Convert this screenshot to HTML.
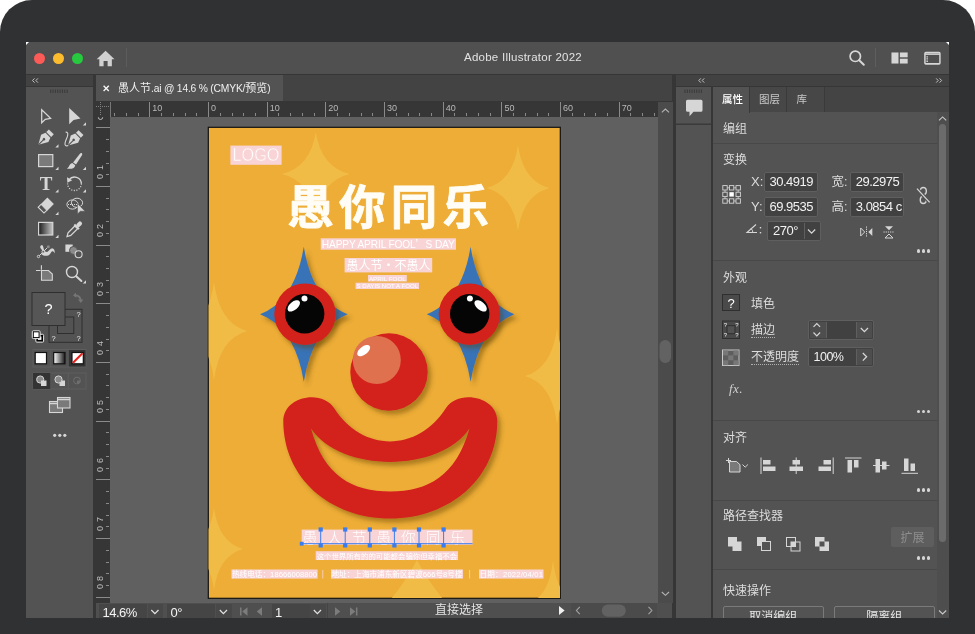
<!DOCTYPE html>
<html><head><meta charset="utf-8"><title>Adobe Illustrator 2022</title>
<style>
*{box-sizing:border-box;margin:0;padding:0}
html,body{width:975px;height:634px;overflow:hidden;background:#fff;font-family:"Liberation Sans","Noto Sans CJK SC",sans-serif;}
.abs{position:absolute}
#bezel{position:absolute;left:0;top:0;width:975px;height:634px;background:#303133;border-radius:32px 32px 0 0;}
#screen{will-change:transform;position:absolute;left:26px;top:42px;width:923px;height:576px;background:#363636;overflow:hidden;color:#ddd;}
#title{position:absolute;left:0;top:0;width:923px;height:32px;background:#505050;}
.tl{position:absolute;top:11.2px;width:11px;height:11px;border-radius:50%}
#title .ttl{position:absolute;left:0;width:100%;top:8px;text-align:center;font-size:11.5px;line-height:14px;color:#e2e2e2;letter-spacing:.25px;padding-left:71px}
#lhead{position:absolute;left:0;top:33px;width:67px;height:11px;background:#424242}
#ltool{position:absolute;left:0;top:45px;width:67px;height:531px;background:#535353}
#tabbar{position:absolute;left:70px;top:33px;width:576px;height:26px;background:#434343}
#tab{position:absolute;left:0;top:0;width:187px;height:26px;background:#535353;font-size:11px;line-height:26px;color:#efefef;white-space:nowrap}
#hruler{position:absolute;left:70px;top:59px;width:562px;height:16px;background:#363636;overflow:hidden}
#vruler{position:absolute;left:70px;top:59px;width:14px;height:502px;background:#363636;overflow:hidden}
#rcorner{position:absolute;left:70px;top:59px;width:14px;height:16px;background:#363636}
#canvas{position:absolute;left:84px;top:75px;width:548px;height:486px;background:#606060;overflow:hidden}
#vscroll{position:absolute;left:632px;top:60px;width:14.5px;height:501px;background:#4b4b4b}
#status{position:absolute;left:70px;top:561px;width:576px;height:15px;background:#4f4f4f;overflow:hidden}
#rhead{position:absolute;left:650px;top:33px;width:273px;height:11px;background:#424242}
#rstrip{position:absolute;left:650px;top:45px;width:34.5px;height:531px;background:#535353}
#panel{position:absolute;left:687px;top:45px;width:236px;height:531px;background:#535353;overflow:hidden}
#ptabs{position:absolute;left:0;top:0;width:236px;height:25px;background:#444}
.sf{position:absolute;top:1px;height:16px;background:#454545;color:#f4f4f4;font-size:13px;line-height:17px;white-space:nowrap;letter-spacing:-.5px}
.sb{position:absolute;top:1px;height:16px;background:#484848}

#hruler i.mt{position:absolute;top:1px;width:1px;height:15px;background:#8a8a8a}
#hruler i.st{position:absolute;top:12px;width:1px;height:3px;background:#8a8a8a}
#hruler b.hl{position:absolute;top:1.5px;font-weight:normal;font-size:9px;line-height:10px;color:#b8b8b8}
#vruler i.vmt{position:absolute;left:0;height:1px;width:14px;background:#8a8a8a}
#vruler i.vst{position:absolute;left:10px;height:1px;width:3px;background:#8a8a8a}
#vruler b.vl{position:absolute;left:0;width:9px;text-align:center;transform:rotate(-90deg);font-weight:normal;font-size:9px;line-height:9px;color:#bdbdbd}

.du{display:inline-block;line-height:13px;border-bottom:1px dotted #b0b0b0}
.pt{position:absolute;line-height:20px;white-space:nowrap}
.inp{position:absolute;letter-spacing:-.5px;background:#414141;border:1px solid #5f5f5f;border-radius:2px;color:#f2f2f2;white-space:nowrap;overflow:hidden}
.ptab{position:absolute;top:0;height:25px;font-size:10.5px;line-height:24px;text-align:left;padding-left:9px;color:#c8c8c8;background:#474747;border-right:1px solid #3a3a3a}
.ptab.on{background:#535353;color:#fff;font-weight:500;height:26px}
.qb{position:absolute;height:20px;border:1px solid #7a7a7a;border-radius:2px;font-size:12px;line-height:21px;text-align:center;color:#e6e6e6}
</style></head><body>
<div id="bezel"></div>
<div id="screen">

<div id="title">
  <div class="tl" style="left:8.2px;background:#fc5b57"></div>
  <div class="tl" style="left:27.2px;background:#fdbc2e"></div>
  <div class="tl" style="left:46px;background:#27c93f"></div>
  <svg class="abs" style="left:70px;top:8px" width="19.2" height="17" viewBox="0 0 18 16"><path d="M9 .8L.6 8.6h2.5V15.2h4V10.3h3.8v4.9h4V8.6h2.5z" fill="#d0d0d0"/></svg>
  <div class="abs" style="left:100px;top:6px;width:1px;height:19px;background:#5c5c5c"></div>
  <div class="ttl">Adobe Illustrator 2022</div>
  <svg class="abs" style="left:822px;top:7px" width="18" height="18" viewBox="0 0 18 18"><circle cx="7.3" cy="7.3" r="5.2" fill="none" stroke="#d6d6d6" stroke-width="1.7"/><path d="M11.2 11.2l4.6 4.6" stroke="#d6d6d6" stroke-width="2" stroke-linecap="round"/></svg>
  <div class="abs" style="left:848.5px;top:6px;width:1px;height:19px;background:#5e5e5e"></div>
  <svg class="abs" style="left:865.3px;top:10px" width="17.6" height="12.5" viewBox="0 0 19 13" preserveAspectRatio="none"><rect x=".5" y=".5" width="7.6" height="11.5" fill="#d6d6d6"/><rect x="9.6" y=".5" width="8.4" height="5" fill="#d6d6d6"/><rect x="9.6" y="7" width="8.4" height="5" fill="#d6d6d6"/></svg>
  <svg class="abs" style="left:897.5px;top:9.3px" width="17.3" height="14.3" viewBox="0 0 19 15" preserveAspectRatio="none"><rect x="1" y="1.5" width="16.5" height="12" rx="1" fill="none" stroke="#d6d6d6" stroke-width="1.6"/><path d="M1 3.3h16.5" stroke="#d6d6d6" stroke-width="1.6"/><path d="M3.5 5.5v6" stroke="#d6d6d6" stroke-width="1.6" stroke-dasharray="1 .7"/></svg>
</div>
<div class="abs" style="left:0;top:0;width:0;height:0;border-top:3px solid #fff;border-right:3px solid transparent"></div>
<div class="abs" style="right:0;top:0;width:0;height:0;border-top:3px solid #fff;border-left:3px solid transparent"></div>


<div id="lhead"><svg class="abs" style="left:0;top:0" width="67" height="11"><path d="M8.5 3.4l-2 2.1 2 2.1M11.9 3.4l-2 2.1 2 2.1" fill="none" stroke="#c4c4c4" stroke-width="1"/></svg></div>
<div id="ltool"></div>
<svg class="abs" style="left:0;top:45px" width="67" height="531" viewBox="26 87 67 531"><rect x="50.2" y="89.5" width="1" height="3.5" fill="#3a3a3a"/><rect x="52.550000000000004" y="89.5" width="1" height="3.5" fill="#3a3a3a"/><rect x="54.900000000000006" y="89.5" width="1" height="3.5" fill="#3a3a3a"/><rect x="57.25" y="89.5" width="1" height="3.5" fill="#3a3a3a"/><rect x="59.6" y="89.5" width="1" height="3.5" fill="#3a3a3a"/><rect x="61.95" y="89.5" width="1" height="3.5" fill="#3a3a3a"/><rect x="64.30000000000001" y="89.5" width="1" height="3.5" fill="#3a3a3a"/><rect x="66.65" y="89.5" width="1" height="3.5" fill="#3a3a3a"/><path d="M41.7 109.7V122.7L45.3 119.3L50.6 118.3z" fill="none" stroke="#d6d6d6" stroke-width="1.25" stroke-linejoin="miter"/><path d="M69.2 108V124.3L73.6 120L80.5 118.4z" fill="#d6d6d6"/><path d="M86 125.5v-3.2l-3.2 3.2z" fill="#d6d6d6"/><g transform="translate(45.2,138) rotate(45) scale(1.08)"><path d="M-3.2-3.6h6.4l1.6 4.2L0 9l-4.8-8.4z" fill="#d6d6d6"/><path d="M0 9V2.4" stroke="#535353" stroke-width="1"/><circle cx="0" cy="1.6" r="1.2" fill="#535353"/><rect x="-3.2" y="-8" width="6.4" height="3.4" fill="#d6d6d6"/></g><path d="M58.5 147.5v-3.2l-3.2 3.2z" fill="#d6d6d6"/><g transform="translate(74.9,138.7) rotate(45) scale(1.08)"><path d="M-3.2-3.6h6.4l1.6 4.2L0 9l-4.8-8.4z" fill="#d6d6d6"/><path d="M0 9V2.4" stroke="#535353" stroke-width="1"/><circle cx="0" cy="1.6" r="1.2" fill="#535353"/><rect x="-3.2" y="-8" width="6.4" height="3.4" fill="#d6d6d6"/></g><path d="M65.6 132.2C68 131.8 68.3 134 67.2 137C66 140 64.2 143.5 65.2 145C65.8 146 67.2 146.2 68.2 145.4" fill="none" stroke="#d6d6d6" stroke-width="1.1"/><rect x="38.6" y="154.6" width="14.2" height="12" fill="#7a7a7a" stroke="#d6d6d6" stroke-width="1.2"/><path d="M58.5 170v-3.2l-3.2 3.2z" fill="#d6d6d6"/><path d="M81.8 153.2c.8.4.5 1.4 0 2.3l-5.8 9-2.9-2.1 6.6-8.4c.7-.9 1.5-1.1 2.1-.8z" fill="#d6d6d6"/><path d="M72.3 163l2.9 2.2c-.2 2.7-2.8 4.1-8.3 3.5 2.6-1.4 2.2-5 5.4-5.7z" fill="#d6d6d6"/><path d="M86 170v-3.2l-3.2 3.2z" fill="#d6d6d6"/><text x="46.2" y="190.4" font-family="Liberation Serif,serif" font-weight="bold" font-size="19" text-anchor="middle" fill="#d6d6d6">T</text><path d="M58.5 192.5v-3.2l-3.2 3.2z" fill="#d6d6d6"/><path d="M69 179.8a6.9 6.9 0 0 1 12.4 3.8" fill="none" stroke="#d6d6d6" stroke-width="1.3"/><path d="M81.4 183.6a6.9 6.9 0 0 1-13.8 0" fill="none" stroke="#d6d6d6" stroke-width="1.3" stroke-dasharray="1.1 1.5"/><path d="M67 177.3l.4 5.4 4.8-2.4z" fill="#d6d6d6"/><path d="M86 192.5v-3.2l-3.2 3.2z" fill="#d6d6d6"/><g transform="translate(45.8,205.6) rotate(-45)"><rect x="-2.2" y="-4.6" width="9" height="9.2" fill="#d6d6d6"/><rect x="-6.6" y="-4.2" width="4.2" height="8.2" fill="none" stroke="#d6d6d6" stroke-width="1.1" transform="translate(0,0)"/></g><path d="M58.5 215v-3.2l-3.2 3.2z" fill="#d6d6d6"/><ellipse cx="72.5" cy="204.5" rx="5.6" ry="4.6" fill="none" stroke="#d6d6d6" stroke-width="1"/><ellipse cx="77" cy="202.8" rx="5.6" ry="4.6" fill="none" stroke="#d6d6d6" stroke-width="1"/><path d="M68 204.5h9" stroke="#d6d6d6" stroke-width="1" stroke-dasharray="1 1"/><path d="M77.5 203.5v10.5l2.8-2.7h4.8z" fill="#d6d6d6" stroke="#535353" stroke-width=".6"/><defs><linearGradient id="gg" x1="0" x2="1"><stop offset="0" stop-color="#1a1a1a"/><stop offset="1" stop-color="#c8c8c8"/></linearGradient></defs><rect x="38.6" y="222.4" width="14.2" height="12.6" fill="url(#gg)" stroke="#d6d6d6" stroke-width="1.2"/><path d="M58.5 238v-3.2l-3.2 3.2z" fill="#d6d6d6"/><g transform="translate(74.2,229.3) rotate(45) scale(1.13)"><path d="M-1.7-2.5h3.4v8.5l-1.7 3-1.7-3z" fill="none" stroke="#d6d6d6" stroke-width="1.1"/><rect x="-2.9" y="-4" width="5.8" height="1.8" fill="#d6d6d6"/><rect x="-1.8" y="-9" width="3.6" height="5.5" rx="1.7" fill="#d6d6d6"/></g><path d="M 40.2 247.1 C 40.2 245 42.8 244.5 43.2 246.7 C 43.6 248.8 44.1 250.9 45.8 251.8 C 48.3 252.6 49.2 248.8 51.7 248.4 C 53.9 248.1 55.1 250.5 54.7 253.5 C 54.3 252.2 53.4 250.9 52.3 251.2 C 50.9 251.5 50.5 255.2 47.1 255.8 C 44.9 256.1 42.8 255.4 41.5 254.3 C 42.8 253.5 42.8 251.8 41.9 250.1 C 41.5 248.8 40.4 248.8 40.2 247.1 Z" fill="#d6d6d6"/><path d="M38.5 256.5l9.8-9.8" stroke="#d6d6d6" stroke-width="1"/><circle cx="38.5" cy="256.5" r="1.2" fill="#535353" stroke="#d6d6d6" stroke-width=".9"/><circle cx="43.2" cy="251.8" r="1.3" fill="#535353" stroke="#d6d6d6" stroke-width=".9"/><circle cx="48.3" cy="246.7" r="1.5" fill="#8a8a8a"/><rect x="65.4" y="244.5" width="7.3" height="7.3" fill="#d6d6d6"/><circle cx="73.5" cy="250.5" r="4" fill="#8a8a8a" stroke="#535353" stroke-width="1"/><circle cx="78.6" cy="254.3" r="3.5" fill="#535353" stroke="#d6d6d6" stroke-width="1.1"/><path d="M36 270.5h4.6M41.4 265.3v4.4" stroke="#d6d6d6" stroke-width="1.1"/><path d="M41.5 270.5h7l3.8 3.6v6.2h-10.8z" fill="#7a7a7a" stroke="#d6d6d6" stroke-width="1.1"/><circle cx="72" cy="272" r="5.5" fill="none" stroke="#d6d6d6" stroke-width="1.4"/><path d="M76.2 276.2l5.2 4.8" stroke="#d6d6d6" stroke-width="2" stroke-linecap="round"/><path d="M86 283.5v-3.2l-3.2 3.2z" fill="#d6d6d6"/><rect x="49" y="309.3" width="33" height="33" fill="#535353" stroke="#2f2f2f" stroke-width="1"/><rect x="57.5" y="317" width="16.3" height="16.5" fill="#535353" stroke="#2f2f2f" stroke-width="1"/><rect x="32" y="292.5" width="33" height="33" fill="#565656" stroke="#2f2f2f" stroke-width="1"/><text x="48.5" y="313.5" font-size="14.5" text-anchor="middle" fill="#fff" font-family="Liberation Sans,sans-serif">?</text><text x="78.5" y="317" font-size="7.5" text-anchor="middle" fill="#e8e8e8" font-family="Liberation Sans,sans-serif">?</text><text x="53.5" y="340.5" font-size="7.5" text-anchor="middle" fill="#e8e8e8" font-family="Liberation Sans,sans-serif">?</text><text x="78.5" y="340.5" font-size="7.5" text-anchor="middle" fill="#e8e8e8" font-family="Liberation Sans,sans-serif">?</text><path d="M74.5 295.5c3.5-.5 6 1.5 6.3 5" fill="none" stroke="#757575" stroke-width="1.8"/><path d="M75.8 292.5l-2.8 3 3.6 2.2zM78 299.5h5.4l-2.6 3.6z" fill="#757575"/><rect x="35.8" y="334.3" width="7.8" height="7.8" rx="1" fill="#000" stroke="#e8e8e8" stroke-width="1"/><rect x="38" y="336.5" width="3.4" height="3.4" fill="#fff"/><rect x="32.3" y="330.8" width="7.8" height="7.8" rx="1" fill="#000" stroke="#e8e8e8" stroke-width="1"/><rect x="33.8" y="332.3" width="4.8" height="4.8" fill="#fff"/><rect x="33" y="349.5" width="53" height="17.5" fill="none" stroke="#5e5e5e" stroke-width="1"/><path d="M50.7 349.5v17.5M68.3 349.5v17.5" stroke="#5e5e5e"/><rect x="68.8" y="350" width="16.7" height="16.5" fill="#333"/><defs><linearGradient id="g2" x1="0" x2="1"><stop offset="0" stop-color="#fff"/><stop offset="1" stop-color="#1a1a1a"/></linearGradient></defs><rect x="35.2" y="352.5" width="11.3" height="11.3" fill="#fff" stroke="#111" stroke-width="1.2"/><rect x="53.7" y="352.5" width="11.3" height="11.3" fill="url(#g2)" stroke="#111" stroke-width="1.2"/><rect x="72" y="352.5" width="11.3" height="11.3" fill="#fff" stroke="#111" stroke-width="1.2"/><path d="M72.8 363l9.7-9.7" stroke="#e8211c" stroke-width="2"/><rect x="33" y="373" width="53" height="16" fill="none" stroke="#5e5e5e" stroke-width="1"/><path d="M50.7 373v16M68.3 373v16" stroke="#5e5e5e"/><rect x="33" y="373" width="17.3" height="16" fill="#333"/><circle cx="40.2" cy="379.5" r="3.6" fill="#8a8a8a" stroke="#d6d6d6" stroke-width="1"/><rect x="41" y="380.5" width="5.5" height="5.5" fill="#d6d6d6"/><rect x="59.5" y="380.5" width="5.5" height="5.5" fill="#d6d6d6"/><circle cx="58.5" cy="379.5" r="3.6" fill="#8a8a8a" stroke="#d6d6d6" stroke-width="1"/><circle cx="77" cy="380.5" r="3.4" fill="none" stroke="#6e6e6e" stroke-width="1"/><path d="M77 380.5h3.4a3.4 3.4 0 0 1-3.4 3.4z" fill="#6e6e6e"/><rect x="49.5" y="401.5" width="13" height="11" fill="#7a7a7a" stroke="#d6d6d6" stroke-width="1.1"/><path d="M49.5 403.5h13" stroke="#d6d6d6" stroke-width="1.5"/><rect x="57.5" y="397.5" width="12.5" height="10.5" fill="#7a7a7a" stroke="#d6d6d6" stroke-width="1.1"/><path d="M57.5 399.5h12.5" stroke="#d6d6d6" stroke-width="1.5"/><circle cx="54.7" cy="435.3" r="1.6" fill="#d6d6d6"/><circle cx="59.8" cy="435.3" r="1.6" fill="#d6d6d6"/><circle cx="64.8" cy="435.3" r="1.6" fill="#d6d6d6"/></svg>


<div id="tabbar"><div id="tab"><svg class="abs" style="left:6px;top:9px" width="9" height="9"><path d="M1.6 1.8l5.2 5.2M6.8 1.8l-5.2 5.2" stroke="#f4f4f4" stroke-width="1.4"/></svg><span class="abs" style="left:22px;top:0">愚人节<span style="font-size:10.3px;letter-spacing:-.2px">.ai @ 14.6 % (CMYK/</span>预览<span style="font-size:10px">)</span></span></div></div>
<div id="canvas"><svg class="abs" style="left:0;top:0" width="548" height="486" viewBox="110 117 548 486"><defs><filter id="sh" x="-20%" y="-20%" width="150%" height="150%"><feDropShadow dx="3.5" dy="4" stdDeviation="2.2" flood-color="#5a3a00" flood-opacity=".42"/></filter><clipPath id="pc"><rect x="208.5" y="127.5" width="351.5" height="470.5"/></clipPath></defs><rect x="208.3" y="127.3" width="352" height="471" fill="#edad36" stroke="#111" stroke-width="1.2"/><g clip-path="url(#pc)" fill="#f1bc46"><path d="M315.8 132Q321.2 167.3 349.8 174Q321.2 180.7 315.8 216Q310.4 180.7 281.8 174Q310.4 167.3 315.8 132z"/><path d="M518 145Q523 181.1 549.5 188Q523 194.9 518 231Q513 194.9 486.5 188Q513 181.1 518 145z"/><path d="M214 282Q219.3 323.2 247 331Q219.3 338.8 214 380Q208.7 338.8 181 331Q208.7 323.2 214 282z"/><path d="M214 508Q218.6 542.4 243 549Q218.6 555.6 214 590Q209.4 555.6 185 549Q209.4 542.4 214 508z"/><path d="M553 560Q556.8 596.1 577 603Q556.8 609.9 553 646Q549.2 609.9 529 603Q549.2 596.1 553 560z"/><path d="M557 328Q562.1 368.3 589 376Q562.1 383.7 557 424Q551.9 383.7 525 376Q551.9 368.3 557 328z"/><path d="M417 560Q433 590.2 455 612Q433 633.8 417 664Q401 633.8 379 612Q401 590.2 417 560z"/></g><rect x="230.4" y="145.6" width="51.2" height="19.2" fill="#f9d4d6"/><text x="256" y="161.3" text-anchor="middle" font-size="17.5" fill="#fff" font-family="Liberation Sans,sans-serif" textLength="47" lengthAdjust="spacingAndGlyphs" stroke="#f9d4d6" stroke-width=".5">LOGO</text><text x="287.3" y="224" font-size="46.5" font-weight="bold" fill="#fffdf5" stroke="#fffdf5" stroke-width=".800" stroke-linejoin="round" font-family="Noto Sans CJK SC,sans-serif" letter-spacing="5.2">愚你同乐</text><rect x="320.7" y="238.3" width="135.3" height="11.4" fill="#f9d4d6"/><text x="388.3" y="247.8" text-anchor="middle" font-size="10.2" fill="#fff" font-family="Liberation Sans,sans-serif" textLength="133" lengthAdjust="spacing">HAPPY APRIL FOOL<tspan font-family="Noto Sans CJK SC,sans-serif">’</tspan>S DAY</text><rect x="344.6" y="258" width="87.6" height="14.4" fill="#f9d4d6"/><text x="388.4" y="269.8" text-anchor="middle" font-size="12" font-weight="400" fill="#fff" font-family="Noto Sans CJK SC,sans-serif" textLength="84" lengthAdjust="spacing">愚人节•不愚人</text><rect x="368" y="275" width="38.8" height="6.5" fill="#f9d4d6"/><text x="387.4" y="280.8" text-anchor="middle" font-size="6" fill="#fff" font-family="Liberation Sans,sans-serif" textLength="37" lengthAdjust="spacingAndGlyphs">APRIL FOOL</text><rect x="355.6" y="282.7" width="63.4" height="6.3" fill="#f9d4d6"/><text x="387.3" y="288.3" text-anchor="middle" font-size="6" fill="#fff" font-family="Liberation Sans,sans-serif" textLength="61.5" lengthAdjust="spacingAndGlyphs">S DAYIS NOT A FOOL</text>
<g filter="url(#sh)"><path d="M303.8 246.7Q312.6 300.7 347.6 314.2Q312.6 327.7 303.8 381.7Q295 327.7 260 314.2Q295 300.7 303.8 246.7z" fill="#3873b7"/></g>
<g filter="url(#sh)"><circle cx="305" cy="314.2" r="30.7" fill="#d3201f"/></g>
<circle cx="304.7" cy="313.7" r="19.7" fill="#050505"/>
<ellipse cx="293.8" cy="305.9" rx="7.4" ry="4" transform="rotate(-40 293.8 305.9)" fill="#fff"/>
<circle cx="304.5" cy="298.5" r="3" fill="#fff"/>
<g filter="url(#sh)"><path d="M470.59999999999997 246.7Q479.4 300.7 514.4 314.2Q479.4 327.7 470.59999999999997 381.7Q461.8 327.7 426.79999999999995 314.2Q461.8 300.7 470.59999999999997 246.7z" fill="#3873b7"/></g>
<g filter="url(#sh)"><circle cx="469.4" cy="314.2" r="30.7" fill="#d3201f"/></g>
<circle cx="469.7" cy="313.7" r="19.7" fill="#050505"/>
<ellipse cx="480.59999999999997" cy="305.9" rx="7.4" ry="4" transform="rotate(40 480.59999999999997 305.9)" fill="#fff"/>
<circle cx="469.9" cy="298.5" r="3" fill="#fff"/><g filter="url(#sh)"><circle cx="389" cy="372" r="38.7" fill="#d3201f"/></g><circle cx="376.8" cy="360" r="24" fill="#e0714f"/><ellipse cx="363.7" cy="350.6" rx="7.6" ry="4" transform="rotate(-38 363.7 350.6)" fill="#fff"/><g filter="url(#sh)"><path d="M283.3 421 C283.3 396 322 389 334 408 C362 452.5 418 452.5 446 408 C458 389 497.3 396 497.3 421 C497.3 478 450 518.5 390.3 518.5 C330 518.5 283.3 478 283.3 421z M311 428.5 C340 473 440 473 469.5 428.5 C456 476 428 491.5 390.3 491.5 C352 491.5 324 476 311 428.5z" fill="#d3201f" fill-rule="evenodd"/></g><rect x="301.7" y="529.6" width="170.8" height="15.2" fill="#f9d4d6"/><text x="302.8" y="542.8" font-size="14.5" font-weight="200" fill="#fff" font-family="Noto Sans CJK SC,sans-serif">愚</text><text x="327.3" y="542.8" font-size="14.5" font-weight="200" fill="#fff" font-family="Noto Sans CJK SC,sans-serif">人</text><text x="351.90000000000003" y="542.8" font-size="14.5" font-weight="200" fill="#fff" font-family="Noto Sans CJK SC,sans-serif">节</text><text x="376.5" y="542.8" font-size="14.5" font-weight="200" fill="#fff" font-family="Noto Sans CJK SC,sans-serif">愚</text><text x="401.1" y="542.8" font-size="14.5" font-weight="200" fill="#fff" font-family="Noto Sans CJK SC,sans-serif">你</text><text x="425.7" y="542.8" font-size="14.5" font-weight="200" fill="#fff" font-family="Noto Sans CJK SC,sans-serif">同</text><text x="450.3" y="542.8" font-size="14.5" font-weight="200" fill="#fff" font-family="Noto Sans CJK SC,sans-serif">乐</text><path d="M301.5 543.7H472.5" stroke="#3b7df0" stroke-width="1"/><path d="M320.7 528.5V546" stroke="#3b7df0" stroke-width="1"/><rect x="318.59999999999997" y="527.4" width="4.2" height="4.2" fill="#3b7df0"/><rect x="318.59999999999997" y="543.3" width="4.2" height="4.2" fill="#3b7df0"/><path d="M345.2 528.5V546" stroke="#3b7df0" stroke-width="1"/><rect x="343.09999999999997" y="527.4" width="4.2" height="4.2" fill="#3b7df0"/><rect x="343.09999999999997" y="543.3" width="4.2" height="4.2" fill="#3b7df0"/><path d="M369.8 528.5V546" stroke="#3b7df0" stroke-width="1"/><rect x="367.7" y="527.4" width="4.2" height="4.2" fill="#3b7df0"/><rect x="367.7" y="543.3" width="4.2" height="4.2" fill="#3b7df0"/><path d="M394.4 528.5V546" stroke="#3b7df0" stroke-width="1"/><rect x="392.29999999999995" y="527.4" width="4.2" height="4.2" fill="#3b7df0"/><rect x="392.29999999999995" y="543.3" width="4.2" height="4.2" fill="#3b7df0"/><path d="M419 528.5V546" stroke="#3b7df0" stroke-width="1"/><rect x="416.9" y="527.4" width="4.2" height="4.2" fill="#3b7df0"/><rect x="416.9" y="543.3" width="4.2" height="4.2" fill="#3b7df0"/><path d="M443.6 528.5V546" stroke="#3b7df0" stroke-width="1"/><rect x="441.5" y="527.4" width="4.2" height="4.2" fill="#3b7df0"/><rect x="441.5" y="543.3" width="4.2" height="4.2" fill="#3b7df0"/><rect x="299.8" y="541.8" width="3.8" height="3.8" fill="#3b7df0"/><rect x="315.7" y="551.2" width="142.3" height="8.8" fill="#f9d4d6"/><text x="386.9" y="558.6" text-anchor="middle" font-size="7.4" fill="#fff" font-family="Noto Sans CJK SC,sans-serif" textLength="140.5" lengthAdjust="spacing">这个世界所有的的可能都会骗你但幸福不会</text><rect x="231.5" y="569.5" width="86.1" height="9.1" fill="#f9d4d6"/><text x="232" y="577.3" font-size="7.6" fill="#fff" font-family="Liberation Sans,Noto Sans CJK SC,sans-serif" textLength="85" lengthAdjust="spacing">热线电话：18666008800</text><path d="M322.8 570v8.5M469.6 570v8.5" stroke="#f9d4d6" stroke-width=".8"/><rect x="331" y="569.5" width="132" height="9.1" fill="#f9d4d6"/><text x="331.5" y="577.3" font-size="7.6" fill="#fff" font-family="Liberation Sans,Noto Sans CJK SC,sans-serif" textLength="131" lengthAdjust="spacing">地址：上海市浦东新区碧波666号8号楼</text><rect x="479" y="569.5" width="64.5" height="9.1" fill="#f9d4d6"/><text x="479.5" y="577.3" font-size="7.6" fill="#fff" font-family="Liberation Sans,Noto Sans CJK SC,sans-serif" textLength="63.5" lengthAdjust="spacing">日期：2022/04/01</text></svg></div>

  <div id="hruler"><i class="mt" style="left:53.3px"></i><b class="hl" style="left:56.3px">10</b><i class="mt" style="left:112px"></i><b class="hl" style="left:115px">0</b><i class="mt" style="left:170.7px"></i><b class="hl" style="left:173.7px">10</b><i class="mt" style="left:229.3px"></i><b class="hl" style="left:232.3px">20</b><i class="mt" style="left:288px"></i><b class="hl" style="left:291px">30</b><i class="mt" style="left:346.7px"></i><b class="hl" style="left:349.7px">40</b><i class="mt" style="left:405.4px"></i><b class="hl" style="left:408.4px">50</b><i class="mt" style="left:464px"></i><b class="hl" style="left:467px">60</b><i class="mt" style="left:522.7px"></i><b class="hl" style="left:525.7px">70</b><i class="st" style="left:18.1px"></i><i class="st" style="left:29.9px"></i><i class="st" style="left:41.6px"></i><i class="st" style="left:65.1px"></i><i class="st" style="left:76.8px"></i><i class="st" style="left:88.5px"></i><i class="st" style="left:100.3px"></i><i class="st" style="left:123.7px"></i><i class="st" style="left:135.5px"></i><i class="st" style="left:147.2px"></i><i class="st" style="left:158.9px"></i><i class="st" style="left:182.4px"></i><i class="st" style="left:194.1px"></i><i class="st" style="left:205.9px"></i><i class="st" style="left:217.6px"></i><i class="st" style="left:241.1px"></i><i class="st" style="left:252.8px"></i><i class="st" style="left:264.5px"></i><i class="st" style="left:276.3px"></i><i class="st" style="left:299.7px"></i><i class="st" style="left:311.5px"></i><i class="st" style="left:323.2px"></i><i class="st" style="left:334.9px"></i><i class="st" style="left:358.4px"></i><i class="st" style="left:370.1px"></i><i class="st" style="left:381.9px"></i><i class="st" style="left:393.6px"></i><i class="st" style="left:417.1px"></i><i class="st" style="left:428.8px"></i><i class="st" style="left:440.6px"></i><i class="st" style="left:452.3px"></i><i class="st" style="left:475.8px"></i><i class="st" style="left:487.5px"></i><i class="st" style="left:499.2px"></i><i class="st" style="left:511px"></i><i class="st" style="left:534.4px"></i><i class="st" style="left:546.2px"></i><i class="st" style="left:557.9px"></i><i class="mt" style="left:13.5px;background:#777"></i></div>
  <div id="vruler"><i class="vmt" style="top:26.3px"></i><i class="vmt" style="top:85px"></i><b class="vl" style="top:62px">1</b><b class="vl" style="top:70.5px">0</b><i class="vmt" style="top:143.6px"></i><b class="vl" style="top:120.6px">2</b><b class="vl" style="top:129.1px">0</b><i class="vmt" style="top:202.3px"></i><b class="vl" style="top:179.3px">3</b><b class="vl" style="top:187.8px">0</b><i class="vmt" style="top:261px"></i><b class="vl" style="top:238px">4</b><b class="vl" style="top:246.5px">0</b><i class="vmt" style="top:319.7px"></i><b class="vl" style="top:296.7px">5</b><b class="vl" style="top:305.2px">0</b><i class="vmt" style="top:378.3px"></i><b class="vl" style="top:355.3px">6</b><b class="vl" style="top:363.8px">0</b><i class="vmt" style="top:437px"></i><b class="vl" style="top:414px">7</b><b class="vl" style="top:422.5px">0</b><i class="vmt" style="top:495.7px"></i><b class="vl" style="top:472.7px">8</b><b class="vl" style="top:481.2px">0</b><i class="vst" style="top:38px"></i><i class="vst" style="top:49.8px"></i><i class="vst" style="top:61.5px"></i><i class="vst" style="top:73.2px"></i><i class="vst" style="top:96.7px"></i><i class="vst" style="top:108.4px"></i><i class="vst" style="top:120.2px"></i><i class="vst" style="top:131.9px"></i><i class="vst" style="top:155.4px"></i><i class="vst" style="top:167.1px"></i><i class="vst" style="top:178.8px"></i><i class="vst" style="top:190.6px"></i><i class="vst" style="top:214px"></i><i class="vst" style="top:225.8px"></i><i class="vst" style="top:237.5px"></i><i class="vst" style="top:249.2px"></i><i class="vst" style="top:272.7px"></i><i class="vst" style="top:284.4px"></i><i class="vst" style="top:296.2px"></i><i class="vst" style="top:307.9px"></i><i class="vst" style="top:331.4px"></i><i class="vst" style="top:343.1px"></i><i class="vst" style="top:354.9px"></i><i class="vst" style="top:366.6px"></i><i class="vst" style="top:390.1px"></i><i class="vst" style="top:401.8px"></i><i class="vst" style="top:413.5px"></i><i class="vst" style="top:425.3px"></i><i class="vst" style="top:448.7px"></i><i class="vst" style="top:460.5px"></i><i class="vst" style="top:472.2px"></i><i class="vst" style="top:483.9px"></i><svg class="abs" style="left:0;top:14px" width="14" height="8"><path d="M2.3 2.3a2.2 2.2 0 0 0 4.4 0" stroke="#bbb" fill="none" stroke-width="1"/></svg></div>
  <div id="rcorner"><svg width="14" height="16" viewBox="0 0 14 16"><path d="M4.5 1v13M0 5.5h14" stroke="#808080" stroke-width="1" stroke-dasharray="1 1" fill="none"/></svg></div>

<div id="vscroll"><svg class="abs" style="left:0;top:0" width="15" height="501"><path d="M3.8 10.4l3.6-3.3 3.6 3.3M3.8 490l3.6 3.3 3.6-3.3" fill="none" stroke="#b4b4b4" stroke-width="1.1"/><rect x="1.5" y="238" width="11.5" height="23" rx="5.7" fill="#626262"/></svg></div>
<div id="status">
  <div class="sf" style="left:3px;width:48px;padding-left:3.5px">14.6%</div><div class="sb" style="left:51.5px;width:15px"></div>
  <div class="sf" style="left:71px;width:48px;padding-left:3.5px">0°</div><div class="sb" style="left:119.5px;width:16px"></div>
  <div class="sf" style="left:175.5px;width:38px;padding-left:3.5px">1</div><div class="sb" style="left:214px;width:16px"></div>
  <div class="abs" style="left:230.5px;top:0;width:1px;height:15px;background:#444"></div>
  <div class="abs" style="left:339px;top:-1px;width:49px;height:17px;line-height:17px;font-size:12px;color:#e4e4e4;white-space:nowrap">直接选择</div>
  <div class="abs" style="left:475px;top:0;width:86px;height:15px;background:#4b4b4b"></div>
  <svg class="abs" style="left:0;top:0" width="576" height="15" viewBox="96 603 576 15">
    <path d="M151.3 610l3.6 3.6 3.6-3.6M219.8 610l3.6 3.6 3.6-3.6M313.8 610l3.6 3.6 3.6-3.6" fill="none" stroke="#e0e0e0" stroke-width="1.3"/>
    <g transform="translate(0,1)"><path d="M240.8 606.5v8" stroke="#7c7c7c" stroke-width="1.5"/><path d="M247.5 606.3v8.4l-5.3-4.2zM262 606.3v8.4l-5.3-4.2z" fill="#7c7c7c"/>
    <path d="M335 606.3v8.4l5.3-4.2zM350 606.3v8.4l5.3-4.2z" fill="#7c7c7c"/><path d="M356.7 606.5v8" stroke="#7c7c7c" stroke-width="1.5"/></g>
    <path d="M559 606v9l5.6-4.5z" fill="#f0f0f0"/>
    <path d="M579.8 606.8l-3.4 3.7 3.4 3.7M648.5 606.8l3.4 3.7-3.4 3.7" fill="none" stroke="#a4a4a4" stroke-width="1.1"/>
    <rect x="601.8" y="604.5" width="24" height="12.3" rx="6.1" fill="#626262"/>
  </svg>
</div>


<div id="rhead"><svg class="abs" style="left:0;top:0" width="273" height="11"><path d="M24.8 3.4l-2 2.1 2 2.1M28.200000000000003 3.4l-2 2.1 2 2.1" fill="none" stroke="#c4c4c4" stroke-width="1"/><path d="M260.2 3.4l2 2.1-2 2.1M263.59999999999997 3.4l2 2.1-2 2.1" fill="none" stroke="#c4c4c4" stroke-width="1"/></svg></div>
<div id="rstrip">
  <svg class="abs" style="left:0;top:0" width="35" height="60" viewBox="676 87 35 60">
    <rect x="684.5" y="89.5" width="1" height="3.5" fill="#3a3a3a"/><rect x="686.85" y="89.5" width="1" height="3.5" fill="#3a3a3a"/><rect x="689.2" y="89.5" width="1" height="3.5" fill="#3a3a3a"/><rect x="691.55" y="89.5" width="1" height="3.5" fill="#3a3a3a"/><rect x="693.9" y="89.5" width="1" height="3.5" fill="#3a3a3a"/><rect x="696.25" y="89.5" width="1" height="3.5" fill="#3a3a3a"/><rect x="698.6" y="89.5" width="1" height="3.5" fill="#3a3a3a"/><rect x="700.95" y="89.5" width="1" height="3.5" fill="#3a3a3a"/>
    <path d="M687.5 99.7h13.5a1.5 1.5 0 0 1 1.5 1.5v9a1.5 1.5 0 0 1-1.5 1.5h-7.5l-4 4.5v-4.5h-2a1.5 1.5 0 0 1-1.5-1.5v-9a1.5 1.5 0 0 1 1.5-1.5z" fill="#d6d6d6"/>
    <rect x="676" y="123.5" width="35" height="1.5" fill="#3a3a3a"/>
  </svg>
</div>
<div id="panel"><div id="ptabs"><div class="ptab on" style="left:0;width:37px">属性</div><div class="ptab" style="left:37px;width:36.5px">图层</div><div class="ptab" style="left:73.5px;width:38px;padding-left:10px">库</div></div><div class="pt" style="left:10px;top:31.5px;font-size:12px;color:#dcdcdc;">编组</div><div class="abs" style="left:0;top:55.5px;width:224px;height:1px;background:#484848"></div><div class="pt" style="left:10px;top:63px;font-size:12px;color:#dcdcdc;">变换</div><div class="pt" style="left:38px;top:85.30000000000001px;font-size:13px;color:#dcdcdc;">X:</div><div class="inp" style="left:50.5px;top:85px;width:54px;height:20px;font-size:13px;line-height:18px;padding-left:5px">30.4919</div><div class="pt" style="left:38px;top:109.80000000000001px;font-size:13px;color:#dcdcdc;">Y:</div><div class="inp" style="left:50.5px;top:110px;width:54px;height:20px;font-size:13px;line-height:18px;padding-left:5px">69.9535</div><div class="pt" style="left:118.5px;top:85.30000000000001px;font-size:12.5px;color:#dcdcdc;">宽:</div><div class="inp" style="left:136.79999999999995px;top:85px;width:54px;height:20px;font-size:13px;line-height:18px;padding-left:5px">29.2975</div><div class="pt" style="left:118.5px;top:109.80000000000001px;font-size:12.5px;color:#dcdcdc;">高:</div><div class="inp" style="left:136.79999999999995px;top:110px;width:54px;height:20px;font-size:13px;line-height:18px;padding-left:5px">3.0854 c</div><div class="inp" style="left:54px;top:134px;width:54px;height:20px;font-size:13px;line-height:18px;padding-left:5px">270°</div><div class="abs" style="left:90.5px;top:136px;width:1px;height:16px;background:#5f5f5f"></div><div class="abs" style="left:204.00000000000003px;top:162.4px;width:3.2px;height:3.2px;border-radius:50%;background:#d6d6d6"></div><div class="abs" style="left:209.00000000000003px;top:162.4px;width:3.2px;height:3.2px;border-radius:50%;background:#d6d6d6"></div><div class="abs" style="left:214.00000000000003px;top:162.4px;width:3.2px;height:3.2px;border-radius:50%;background:#d6d6d6"></div><div class="abs" style="left:0;top:173px;width:224px;height:1px;background:#484848"></div><div class="pt" style="left:10px;top:181px;font-size:12px;color:#dcdcdc;">外观</div><div class="pt" style="left:38px;top:207px;font-size:12px;color:#dcdcdc;">填色</div><div class="pt" style="left:38px;top:232.5px;font-size:12px;color:#dcdcdc;"><span class="du">描边</span></div><div class="pt" style="left:38px;top:260px;font-size:12px;color:#dcdcdc;"><span class="du">不透明度</span></div><div class="inp" style="left:94.5px;top:233px;width:66.5px;height:20px;font-size:13px;line-height:18px;padding-left:5px"></div><div class="abs" style="left:96.5px;top:235px;width:16px;height:16px;background:#4e4e4e"></div><div class="abs" style="left:143.5px;top:235px;width:15.5px;height:16px;background:#4e4e4e"></div><div class="abs" style="left:112.5px;top:235px;width:1px;height:16px;background:#5f5f5f"></div><div class="abs" style="left:143px;top:235px;width:1px;height:16px;background:#5f5f5f"></div><div class="inp" style="left:94.5px;top:260px;width:66.5px;height:20px;font-size:12.5px;line-height:18px;padding-left:5px">100%</div><div class="abs" style="left:143.5px;top:262px;width:15.5px;height:16px;background:#4e4e4e"></div><div class="abs" style="left:143px;top:262px;width:1px;height:16px;background:#5f5f5f"></div><div class="pt" style="left:16px;top:292px;font-size:13px;color:#d0d0d0;font-family:Liberation Serif,serif;letter-spacing:.3px"><i>fx</i>.</div><div class="abs" style="left:204.00000000000003px;top:322.9px;width:3.2px;height:3.2px;border-radius:50%;background:#d6d6d6"></div><div class="abs" style="left:209.00000000000003px;top:322.9px;width:3.2px;height:3.2px;border-radius:50%;background:#d6d6d6"></div><div class="abs" style="left:214.00000000000003px;top:322.9px;width:3.2px;height:3.2px;border-radius:50%;background:#d6d6d6"></div><div class="abs" style="left:0;top:333px;width:224px;height:1px;background:#484848"></div><div class="pt" style="left:10px;top:341.3px;font-size:12px;color:#dcdcdc;">对齐</div><div class="abs" style="left:204.00000000000003px;top:401.4px;width:3.2px;height:3.2px;border-radius:50%;background:#d6d6d6"></div><div class="abs" style="left:209.00000000000003px;top:401.4px;width:3.2px;height:3.2px;border-radius:50%;background:#d6d6d6"></div><div class="abs" style="left:214.00000000000003px;top:401.4px;width:3.2px;height:3.2px;border-radius:50%;background:#d6d6d6"></div><div class="abs" style="left:0;top:412.5px;width:224px;height:1px;background:#484848"></div><div class="pt" style="left:10px;top:419px;font-size:12px;color:#dcdcdc;">路径查找器</div><div class="abs" style="left:178px;top:440.4px;width:43px;height:19.4px;background:#5e5e5e;border-radius:2px;color:#8e8e8e;font-size:12px;line-height:22px;text-align:center">扩展</div><div class="abs" style="left:204.00000000000003px;top:469.4px;width:3.2px;height:3.2px;border-radius:50%;background:#d6d6d6"></div><div class="abs" style="left:209.00000000000003px;top:469.4px;width:3.2px;height:3.2px;border-radius:50%;background:#d6d6d6"></div><div class="abs" style="left:214.00000000000003px;top:469.4px;width:3.2px;height:3.2px;border-radius:50%;background:#d6d6d6"></div><div class="abs" style="left:0;top:482px;width:224px;height:1px;background:#484848"></div><div class="pt" style="left:10px;top:494.29999999999995px;font-size:12px;color:#dcdcdc;">快速操作</div><div class="qb" style="left:9.5px;top:519.3px;width:101.5px">取消编组</div><div class="qb" style="left:120.5px;top:519.3px;width:101.5px">隔离组</div><div class="abs" style="left:224px;top:25px;width:12px;height:506px;background:#4e4e4e"></div><div class="abs" style="left:225.70000000000005px;top:37px;width:7.6px;height:418px;border-radius:4px;background:#6b6b6b"></div><svg class="abs" style="left:224px;top:25px" width="12" height="506" viewBox="937 112 12 506"><path d="M939 120.3l3.6-3.4 3.6 3.4M939 610.5l3.6 3.4 3.6-3.4" fill="none" stroke="#c8c8c8" stroke-width="1.1"/></svg><svg class="abs" style="left:0;top:0" width="224" height="531" viewBox="713 87 224 531"><rect x="722.8" y="185.6" width="4.4" height="4.4" fill="none" stroke="#d6d6d6" stroke-width=".9"/><rect x="729.4" y="185.6" width="4.4" height="4.4" fill="none" stroke="#d6d6d6" stroke-width=".9"/><rect x="736" y="185.6" width="4.4" height="4.4" fill="none" stroke="#d6d6d6" stroke-width=".9"/><rect x="722.8" y="192.2" width="4.4" height="4.4" fill="none" stroke="#d6d6d6" stroke-width=".9"/><rect x="729.4" y="192.2" width="4.4" height="4.4" fill="#fff"/><rect x="736" y="192.2" width="4.4" height="4.4" fill="none" stroke="#d6d6d6" stroke-width=".9"/><rect x="722.8" y="198.79999999999998" width="4.4" height="4.4" fill="none" stroke="#d6d6d6" stroke-width=".9"/><rect x="729.4" y="198.79999999999998" width="4.4" height="4.4" fill="none" stroke="#d6d6d6" stroke-width=".9"/><rect x="736" y="198.79999999999998" width="4.4" height="4.4" fill="none" stroke="#d6d6d6" stroke-width=".9"/><path d="M727.2 187.8h2.2M733.8 187.8h2.2M727.2 201h2.2M733.8 201h2.2M725 190v2.2M725 196.6v2.2M738.2 190v2.2M738.2 196.6v2.2" stroke="#d6d6d6" stroke-width=".8"/><path d="M756 224.5l-9 8h10" fill="none" stroke="#d6d6d6" stroke-width="1.1"/><path d="M751 228.5a5 5 0 0 1 1.8 4" fill="none" stroke="#d6d6d6" stroke-width="1"/><rect x="759.8" y="227" width="1.4" height="1.4" fill="#d6d6d6"/><rect x="759.8" y="232" width="1.4" height="1.4" fill="#d6d6d6"/><path d="M808 229.5l3.6 3.6 3.6-3.6" fill="none" stroke="#d6d6d6" stroke-width="1.3"/><path d="M860.7 228v8l4-4z" fill="none" stroke="#d6d6d6" stroke-width="1"/><path d="M872.3 228v8l-4-4z" fill="#d6d6d6"/><path d="M866.5 226.5v11" stroke="#d6d6d6" stroke-width="1" stroke-dasharray="1.2 1"/><path d="M885 226.2h8l-4 4z" fill="#d6d6d6"/><path d="M885 238h8l-4-4z" fill="none" stroke="#d6d6d6" stroke-width="1"/><path d="M883.5 232h11" stroke="#d6d6d6" stroke-width="1" stroke-dasharray="1.2 1"/><g transform="translate(923.3,195.5) scale(1.15)"><rect x="-2.6" y="-7" width="5.2" height="6.4" rx="2.6" fill="none" stroke="#d6d6d6" stroke-width="1.2"/><rect x="-2.6" y=".6" width="5.2" height="6.4" rx="2.6" fill="none" stroke="#d6d6d6" stroke-width="1.2"/><path d="M-6-6.5L6 6.5" stroke="#535353" stroke-width="3"/><path d="M-5.5-6L5.5 6" stroke="#d6d6d6" stroke-width="1.1"/></g><rect x="722.5" y="294.5" width="17" height="16" fill="#4a4a4a" stroke="#2f2f2f" stroke-width="1"/><text x="731" y="307.5" font-size="13" text-anchor="middle" fill="#fff" font-family="Liberation Sans,sans-serif">?</text><rect x="722.5" y="321" width="17" height="17.5" fill="#4a4a4a" stroke="#2f2f2f" stroke-width="1"/><rect x="727" y="325.7" width="8" height="8" fill="#535353" stroke="#2f2f2f" stroke-width="1"/><text x="725.3" y="327" font-size="6" text-anchor="middle" fill="#eee" font-family="Liberation Sans,sans-serif">?</text><text x="736.8" y="327" font-size="6" text-anchor="middle" fill="#eee" font-family="Liberation Sans,sans-serif">?</text><text x="725.3" y="337.3" font-size="6" text-anchor="middle" fill="#eee" font-family="Liberation Sans,sans-serif">?</text><text x="736.8" y="337.3" font-size="6" text-anchor="middle" fill="#eee" font-family="Liberation Sans,sans-serif">?</text><rect x="722.5" y="350" width="16.5" height="15.5" fill="#5e5e5e" stroke="#c8c8c8" stroke-width="1"/><rect x="723" y="350.5" width="5.2" height="4.9" fill="#777"/><rect x="733.4" y="350.5" width="5.2" height="4.9" fill="#777"/><rect x="728.2" y="355.4" width="5.2" height="4.9" fill="#777"/><rect x="723" y="360.3" width="5.2" height="4.9" fill="#777"/><rect x="733.4" y="360.3" width="5.2" height="4.9" fill="#777"/><path d="M813.5 326.8l3.3-3.3 3.3 3.3M813.5 332.5l3.3 3.3 3.3-3.3" fill="none" stroke="#d6d6d6" stroke-width="1.2"/><path d="M860.8 328l3.6 3.6 3.6-3.6" fill="none" stroke="#d6d6d6" stroke-width="1.3"/><path d="M862.8 353l3.8 3.8-3.8 3.8" fill="none" stroke="#d6d6d6" stroke-width="1.3"/><path d="M726 460.5h5M728.5 458v5" stroke="#d6d6d6" stroke-width="1"/><path d="M729.5 461.5h7l3.5 3.2v7.3h-10.5z" fill="#7a7a7a" stroke="#d6d6d6" stroke-width="1"/><path d="M742.5 464.5l2.7 2.7 2.7-2.7" fill="none" stroke="#d6d6d6" stroke-width="1"/><path d="M761 457.5v16.5" stroke="#d6d6d6" stroke-width="1"/><rect x="763" y="460" width="7.5" height="4.5" fill="#d6d6d6"/><rect x="763" y="466.5" width="12.5" height="4.5" fill="#d6d6d6"/><path d="M796.2 457.5v16.5" stroke="#d6d6d6" stroke-width="1"/><rect x="792.5" y="460" width="7.5" height="4.5" fill="#d6d6d6"/><rect x="789.5" y="466.5" width="13.5" height="4.5" fill="#d6d6d6"/><path d="M833.2 457.5v16.5" stroke="#d6d6d6" stroke-width="1"/><rect x="823.5" y="460" width="7.5" height="4.5" fill="#d6d6d6"/><rect x="818.5" y="466.5" width="12.5" height="4.5" fill="#d6d6d6"/><path d="M845 458h16.5" stroke="#d6d6d6" stroke-width="1"/><rect x="847.5" y="460" width="4.5" height="12.5" fill="#d6d6d6"/><rect x="854" y="460" width="4.5" height="7.5" fill="#d6d6d6"/><path d="M873 465.5h16.5" stroke="#d6d6d6" stroke-width="1"/><rect x="875.5" y="459" width="4.5" height="13.5" fill="#d6d6d6"/><rect x="882" y="461.5" width="4.5" height="8" fill="#d6d6d6"/><path d="M901.5 473.3h16.5" stroke="#d6d6d6" stroke-width="1"/><rect x="904" y="458.5" width="4.5" height="12.5" fill="#d6d6d6"/><rect x="910.5" y="463.5" width="4.5" height="7.5" fill="#d6d6d6"/><path d="M728 537h9v4.5h4.5v9.5h-9v-4.5h-4.5z" fill="#d6d6d6"/><rect x="757" y="537" width="9" height="9" fill="#d6d6d6"/><rect x="761.5" y="541.5" width="9" height="9" fill="#535353" stroke="#d6d6d6" stroke-width="1"/><rect x="786.5" y="537.5" width="9" height="9" fill="none" stroke="#d6d6d6" stroke-width="1"/><rect x="791" y="542" width="9" height="9" fill="none" stroke="#d6d6d6" stroke-width="1"/><rect x="791" y="542" width="4.5" height="4.5" fill="#d6d6d6"/><path d="M815 537h9.5v4.5h4.5v9.5h-9.5v-4.5h-4.5z" fill="#d6d6d6"/><rect x="819.5" y="541.5" width="5" height="5" fill="#535353"/></svg></div>

</div>
</body></html>
